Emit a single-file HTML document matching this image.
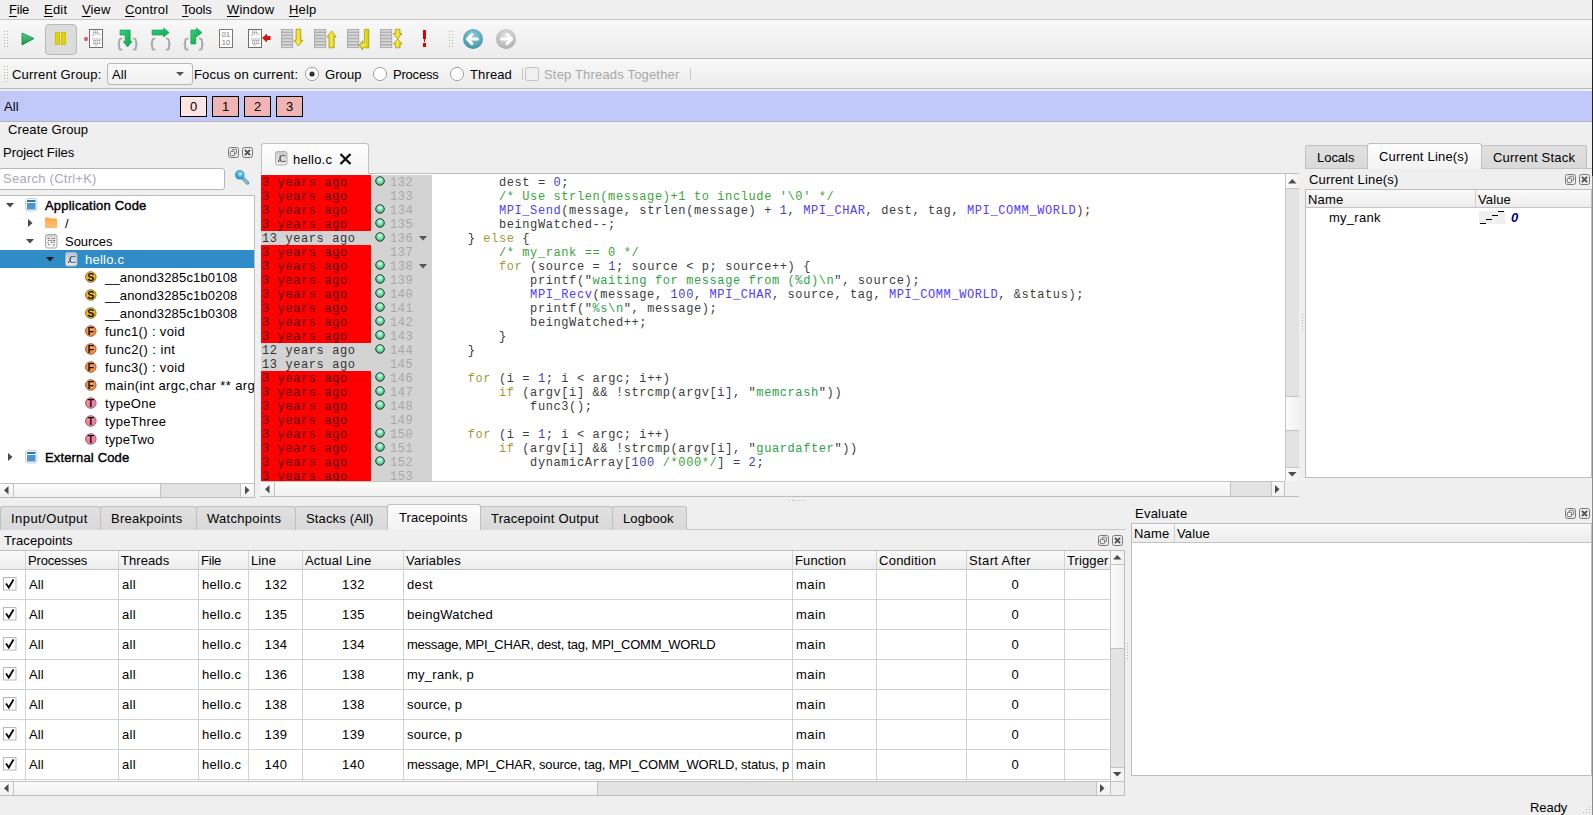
<!DOCTYPE html><html><head><meta charset="utf-8"><style>
*{box-sizing:border-box;margin:0;padding:0}
html,body{width:1593px;height:815px;overflow:hidden;background:#efefef;font-family:"Liberation Sans",sans-serif;font-size:13px;color:#000}
body{position:relative}
.a{position:absolute}
.t{position:absolute;white-space:nowrap;line-height:16px}
.mono{font-family:"Liberation Mono",monospace}
u{text-decoration:underline;text-underline-offset:2px;text-decoration-thickness:1px}
.grip{position:absolute;width:5px;background-image:radial-gradient(circle,#b4b4b4 0.9px,transparent 1.1px);background-size:3px 3px}
.hl{position:absolute;height:1px}
.vl{position:absolute;width:1px}
.tab{position:absolute;border:1px solid #bdbdbd;border-bottom:none;border-radius:3px 3px 0 0;background:linear-gradient(#e4e4e4,#d8d8d8)}
.tab.sel{background:linear-gradient(#fdfdfd,#f0f0f0)}
.tab .t{top:5px}
.db{position:absolute;width:11px;height:11px}
svg{position:absolute;overflow:visible}
</style></head><body>
<div class="t" style="left:9px;top:2px;;letter-spacing:-0.219px"><u>F</u>ile</div>
<div class="t" style="left:44px;top:2px;;letter-spacing:0.207px"><u>E</u>dit</div>
<div class="t" style="left:82px;top:2px;;letter-spacing:0.129px"><u>V</u>iew</div>
<div class="t" style="left:125px;top:2px;;letter-spacing:0.208px"><u>C</u>ontrol</div>
<div class="t" style="left:182px;top:2px;;letter-spacing:-0.159px"><u>T</u>ools</div>
<div class="t" style="left:227px;top:2px;;letter-spacing:0.177px"><u>W</u>indow</div>
<div class="t" style="left:289px;top:2px;;letter-spacing:0.156px"><u>H</u>elp</div>
<div class="a" style="left:0px;top:19px;width:1593px;height:1px;background:#c6c6c6"></div>
<div class="a" style="left:0px;top:20px;width:1593px;height:38px;background:linear-gradient(#f8f8f8,#ececec)"></div>
<div class="a" style="left:0px;top:58px;width:1593px;height:1px;background:#b9b9b9"></div>
<div class="a" style="left:0px;top:59px;width:1593px;height:29px;background:linear-gradient(#f8f8f8,#ececec)"></div>
<div class="a" style="left:0px;top:88px;width:1593px;height:1px;background:#b9b9b9"></div>
<svg style="left:4px;top:31px" width="6" height="18"><rect x="0" y="0" width="1" height="1" fill="#b2b2b2"/><rect x="0" y="3" width="1" height="1" fill="#b2b2b2"/><rect x="0" y="6" width="1" height="1" fill="#b2b2b2"/><rect x="0" y="9" width="1" height="1" fill="#b2b2b2"/><rect x="0" y="12" width="1" height="1" fill="#b2b2b2"/><rect x="0" y="15" width="1" height="1" fill="#b2b2b2"/><rect x="3" y="0" width="1" height="1" fill="#b2b2b2"/><rect x="3" y="3" width="1" height="1" fill="#b2b2b2"/><rect x="3" y="6" width="1" height="1" fill="#b2b2b2"/><rect x="3" y="9" width="1" height="1" fill="#b2b2b2"/><rect x="3" y="12" width="1" height="1" fill="#b2b2b2"/><rect x="3" y="15" width="1" height="1" fill="#b2b2b2"/></svg>
<svg style="left:0;top:0" width="1" height="1"><defs><linearGradient id="gg" x1="0" y1="0" x2="0" y2="1"><stop offset="0" stop-color="#5fd08a"/><stop offset="1" stop-color="#0f8f3f"/></linearGradient><linearGradient id="yg" x1="0" y1="0" x2="1" y2="0"><stop offset="0" stop-color="#f2e64a"/><stop offset="1" stop-color="#cbb800"/></linearGradient><radialGradient id="bg1" cx="0.5" cy="0.35" r="0.7"><stop offset="0" stop-color="#8fd0dc"/><stop offset="1" stop-color="#3a8ea6"/></radialGradient><radialGradient id="bg2" cx="0.5" cy="0.35" r="0.7"><stop offset="0" stop-color="#e6e6e6"/><stop offset="1" stop-color="#a9a9a9"/></radialGradient><radialGradient id="gdot" cx="0.5" cy="0.35" r="0.65"><stop offset="0" stop-color="#e8fff4"/><stop offset="0.55" stop-color="#6fdca4"/><stop offset="1" stop-color="#2fae6a"/></radialGradient></defs></svg>
<svg style="left:21px;top:32px" width="14" height="14"><path d="M1 1 L13 6.5 L1 13 Z" fill="url(#gg)" stroke="#138a43" stroke-width="0.8"/></svg>
<div class="a" style="left:45px;top:24px;width:32px;height:31px;background:#dcdcdc;border:1px solid #b9b9b9;border-radius:4px"></div>
<svg style="left:55px;top:32px" width="12" height="14"><rect x="0.5" y="0.5" width="4" height="12" fill="#e2d400" stroke="#c8b900" stroke-width="0.8"/><rect x="6.5" y="0.5" width="4" height="12" fill="#e2d400" stroke="#c8b900" stroke-width="0.8"/></svg>
<svg style="left:84px;top:37px" width="5" height="5"><circle cx="2" cy="2" r="1.9" fill="#e83a3a"/><rect x="1.6" y="1.6" width="0.8" height="0.8" fill="#fff"/></svg>
<svg style="left:89px;top:29px" width="14" height="19"><rect x="0.5" y="0.5" width="13" height="18" fill="#fff" stroke="#6d6d6d"/><line x1="4" y1="2" x2="9" y2="2" stroke="#9a9a9a" stroke-width="0.9" stroke-dasharray="1.5 0.5"/><line x1="4" y1="3.5" x2="10" y2="3.5" stroke="#9a9a9a" stroke-width="0.9" stroke-dasharray="1.5 0.5"/><line x1="4" y1="5" x2="12" y2="5" stroke="#9a9a9a" stroke-width="0.9" stroke-dasharray="1.5 0.5"/><line x1="3" y1="6.5" x2="5" y2="6.5" stroke="#9a9a9a" stroke-width="0.9" stroke-dasharray="1.5 0.5"/><line x1="3" y1="10" x2="12" y2="10" stroke="#9a9a9a" stroke-width="0.9" stroke-dasharray="1.5 0.5"/><line x1="4" y1="11.5" x2="12" y2="11.5" stroke="#9a9a9a" stroke-width="0.9" stroke-dasharray="1.5 0.5"/><line x1="4" y1="13" x2="11" y2="13" stroke="#9a9a9a" stroke-width="0.9" stroke-dasharray="1.5 0.5"/><line x1="4" y1="14.5" x2="12" y2="14.5" stroke="#9a9a9a" stroke-width="0.9" stroke-dasharray="1.5 0.5"/><line x1="5" y1="16" x2="9" y2="16" stroke="#9a9a9a" stroke-width="0.9" stroke-dasharray="1.5 0.5"/></svg>
<svg style="left:0;top:0" width="1593" height="60"><path d="M121.6 38.6 Q119.2 38.6 119.2 41 V42.6 Q119.2 44.2 117.6 44.2 Q119.2 44.2 119.2 45.8 V47.4 Q119.2 49.6 121.6 49.6" stroke="#a9a9a9" stroke-width="1.9" fill="none" stroke-linecap="round"/><path d="M133.6 38.6 Q136 38.6 136 41 V42.6 Q136 44.2 137.6 44.2 Q136 44.2 136 45.8 V47.4 Q136 49.6 133.6 49.6" stroke="#a9a9a9" stroke-width="1.9" fill="none" stroke-linecap="round"/><path d="M154.6 38.6 Q152.2 38.6 152.2 41 V42.6 Q152.2 44.2 150.6 44.2 Q152.2 44.2 152.2 45.8 V47.4 Q152.2 49.6 154.6 49.6" stroke="#a9a9a9" stroke-width="1.9" fill="none" stroke-linecap="round"/><path d="M166.6 38.6 Q169 38.6 169 41 V42.6 Q169 44.2 170.6 44.2 Q169 44.2 169 45.8 V47.4 Q169 49.6 166.6 49.6" stroke="#a9a9a9" stroke-width="1.9" fill="none" stroke-linecap="round"/><path d="M187.6 38.6 Q185.2 38.6 185.2 41 V42.6 Q185.2 44.2 183.6 44.2 Q185.2 44.2 185.2 45.8 V47.4 Q185.2 49.6 187.6 49.6" stroke="#a9a9a9" stroke-width="1.9" fill="none" stroke-linecap="round"/><path d="M199.6 38.6 Q202 38.6 202 41 V42.6 Q202 44.2 203.6 44.2 Q202 44.2 202 45.8 V47.4 Q202 49.6 199.6 49.6" stroke="#a9a9a9" stroke-width="1.9" fill="none" stroke-linecap="round"/><path d="M120 30 H130.2 V41.3 H132.2 L127.6 47 L123 41.3 H125.2 V35 H120 Z" fill="url(#gg2)" stroke="#0f9a48" stroke-width="0.6"/><path d="M152 30 H163.5 V28 L169.2 32.5 L163.5 37 V35 H152 Z" fill="url(#gg2)" stroke="#0f9a48" stroke-width="0.6"/><path d="M190.8 44 V30 H196.4 V28 L202 32.5 L196.4 37 V35 H195.8 V44 Z" fill="url(#gg2)" stroke="#0f9a48" stroke-width="0.6"/><defs><linearGradient id="gg2" x1="0" y1="0" x2="1" y2="1"><stop offset="0" stop-color="#38d27a"/><stop offset="1" stop-color="#0aa04a"/></linearGradient></defs></svg>
<svg style="left:219px;top:29px" width="15" height="19"><rect x="0.5" y="0.5" width="13" height="18" fill="#fff" stroke="#7a7a7a"/><text x="7" y="8" text-anchor="middle" font-family="Liberation Sans" font-size="7.5" fill="#7a7a7a">01</text><text x="7" y="16" text-anchor="middle" font-family="Liberation Sans" font-size="7.5" fill="#7a7a7a">10</text></svg>
<svg style="left:248px;top:29px" width="14" height="19"><rect x="0.5" y="0.5" width="13" height="18" fill="#fff" stroke="#6d6d6d"/><line x1="4" y1="2" x2="9" y2="2" stroke="#9a9a9a" stroke-width="0.9" stroke-dasharray="1.5 0.5"/><line x1="4" y1="3.5" x2="10" y2="3.5" stroke="#9a9a9a" stroke-width="0.9" stroke-dasharray="1.5 0.5"/><line x1="4" y1="5" x2="12" y2="5" stroke="#9a9a9a" stroke-width="0.9" stroke-dasharray="1.5 0.5"/><line x1="3" y1="6.5" x2="5" y2="6.5" stroke="#9a9a9a" stroke-width="0.9" stroke-dasharray="1.5 0.5"/><line x1="3" y1="10" x2="12" y2="10" stroke="#9a9a9a" stroke-width="0.9" stroke-dasharray="1.5 0.5"/><line x1="4" y1="11.5" x2="12" y2="11.5" stroke="#9a9a9a" stroke-width="0.9" stroke-dasharray="1.5 0.5"/><line x1="4" y1="13" x2="11" y2="13" stroke="#9a9a9a" stroke-width="0.9" stroke-dasharray="1.5 0.5"/><line x1="4" y1="14.5" x2="12" y2="14.5" stroke="#9a9a9a" stroke-width="0.9" stroke-dasharray="1.5 0.5"/><line x1="5" y1="16" x2="9" y2="16" stroke="#9a9a9a" stroke-width="0.9" stroke-dasharray="1.5 0.5"/></svg>
<svg style="left:262px;top:33px" width="9" height="10"><path d="M0 5 L5 0.5 V3 H8.5 V7 H5 V9.5 Z" fill="#d81010"/></svg>
<svg style="left:0;top:0" width="1593" height="60"><defs><linearGradient id="yg2" x1="0" y1="0" x2="1" y2="0"><stop offset="0" stop-color="#d8c800"/><stop offset="0.45" stop-color="#f4ea50"/><stop offset="1" stop-color="#d2c200"/></linearGradient></defs><rect x="281.5" y="29.5" width="11.2" height="2.6" fill="#d9d9d9" stroke="#a9a9a9" stroke-width="0.9"/><rect x="281.5" y="32.6" width="11.2" height="2.6" fill="#d9d9d9" stroke="#a9a9a9" stroke-width="0.9"/><rect x="281.5" y="35.7" width="11.2" height="2.6" fill="#d9d9d9" stroke="#a9a9a9" stroke-width="0.9"/><rect x="281.5" y="38.8" width="11.2" height="2.6" fill="#d9d9d9" stroke="#a9a9a9" stroke-width="0.9"/><rect x="281.5" y="41.9" width="11.2" height="2.6" fill="#d9d9d9" stroke="#a9a9a9" stroke-width="0.9"/><rect x="281.5" y="45.0" width="11.2" height="2.6" fill="#d9d9d9" stroke="#a9a9a9" stroke-width="0.9"/><rect x="314.5" y="29.5" width="11.2" height="2.6" fill="#d9d9d9" stroke="#a9a9a9" stroke-width="0.9"/><rect x="314.5" y="32.6" width="11.2" height="2.6" fill="#d9d9d9" stroke="#a9a9a9" stroke-width="0.9"/><rect x="314.5" y="35.7" width="11.2" height="2.6" fill="#d9d9d9" stroke="#a9a9a9" stroke-width="0.9"/><rect x="314.5" y="38.8" width="11.2" height="2.6" fill="#d9d9d9" stroke="#a9a9a9" stroke-width="0.9"/><rect x="314.5" y="41.9" width="11.2" height="2.6" fill="#d9d9d9" stroke="#a9a9a9" stroke-width="0.9"/><rect x="314.5" y="45.0" width="11.2" height="2.6" fill="#d9d9d9" stroke="#a9a9a9" stroke-width="0.9"/><rect x="347.5" y="29.5" width="11.2" height="2.6" fill="#d9d9d9" stroke="#a9a9a9" stroke-width="0.9"/><rect x="347.5" y="32.6" width="11.2" height="2.6" fill="#d9d9d9" stroke="#a9a9a9" stroke-width="0.9"/><rect x="347.5" y="35.7" width="11.2" height="2.6" fill="#d9d9d9" stroke="#a9a9a9" stroke-width="0.9"/><rect x="347.5" y="38.8" width="11.2" height="2.6" fill="#d9d9d9" stroke="#a9a9a9" stroke-width="0.9"/><rect x="347.5" y="41.9" width="11.2" height="2.6" fill="#d9d9d9" stroke="#a9a9a9" stroke-width="0.9"/><rect x="347.5" y="45.0" width="11.2" height="2.6" fill="#d9d9d9" stroke="#a9a9a9" stroke-width="0.9"/><rect x="380.5" y="29.5" width="11.2" height="2.6" fill="#d9d9d9" stroke="#a9a9a9" stroke-width="0.9"/><rect x="380.5" y="32.6" width="11.2" height="2.6" fill="#d9d9d9" stroke="#a9a9a9" stroke-width="0.9"/><rect x="380.5" y="35.7" width="11.2" height="2.6" fill="#d9d9d9" stroke="#a9a9a9" stroke-width="0.9"/><rect x="380.5" y="38.8" width="11.2" height="2.6" fill="#d9d9d9" stroke="#a9a9a9" stroke-width="0.9"/><rect x="380.5" y="41.9" width="11.2" height="2.6" fill="#d9d9d9" stroke="#a9a9a9" stroke-width="0.9"/><rect x="380.5" y="45.0" width="11.2" height="2.6" fill="#d9d9d9" stroke="#a9a9a9" stroke-width="0.9"/><path d="M296 29.3 H300.8 V40.3 H303 L298.4 46 L293.8 40.3 H296 Z" fill="url(#yg2)" stroke="#a89a00" stroke-width="0.8" stroke-linejoin="miter"/><path d="M329 47.8 H334.2 V37 H336.2 L331.6 30.9 L327 37 H329 Z" fill="url(#yg2)" stroke="#a89a00" stroke-width="0.8" stroke-linejoin="miter"/><path d="M364.4 29.3 H368.8 V47.8 H362.5 V50 L359.2 45.2 L362.5 40.7 V43.2 H364.4 Z" fill="url(#yg2)" stroke="#a89a00" stroke-width="0.8" stroke-linejoin="miter"/><path d="M395.4 29.3 H400 V33.5 H402 L397.7 39 L393.4 33.5 H395.4 Z M395.4 47.8 H400 V44 H402 L397.7 39 L393.4 44 H395.4 Z" fill="url(#yg2)" stroke="#a89a00" stroke-width="0.8" stroke-linejoin="miter"/></svg>
<div class="a" style="left:423px;top:30px;width:3px;height:9px;background:#e00000"></div>
<div class="a" style="left:424px;top:39px;width:1px;height:3px;background:#e00000"></div>
<div class="a" style="left:423px;top:43px;width:3px;height:4px;background:#e00000"></div>
<svg style="left:449px;top:31px" width="6" height="18"><rect x="0" y="0" width="1" height="1" fill="#b2b2b2"/><rect x="0" y="3" width="1" height="1" fill="#b2b2b2"/><rect x="0" y="6" width="1" height="1" fill="#b2b2b2"/><rect x="0" y="9" width="1" height="1" fill="#b2b2b2"/><rect x="0" y="12" width="1" height="1" fill="#b2b2b2"/><rect x="0" y="15" width="1" height="1" fill="#b2b2b2"/><rect x="3" y="0" width="1" height="1" fill="#b2b2b2"/><rect x="3" y="3" width="1" height="1" fill="#b2b2b2"/><rect x="3" y="6" width="1" height="1" fill="#b2b2b2"/><rect x="3" y="9" width="1" height="1" fill="#b2b2b2"/><rect x="3" y="12" width="1" height="1" fill="#b2b2b2"/><rect x="3" y="15" width="1" height="1" fill="#b2b2b2"/></svg>
<svg style="left:462px;top:28px" width="22" height="22"><circle cx="11" cy="11" r="10" fill="url(#bg1)"/><path d="M5.5 11 L10 6.3 M5.5 11 L10 15.7 M5.5 11 H15.5" stroke="#fff" stroke-width="3" fill="none" stroke-linecap="round"/></svg>
<svg style="left:495px;top:28px" width="22" height="22"><circle cx="11" cy="11" r="10" fill="url(#bg2)"/><path d="M16.5 11 L12 6.3 M16.5 11 L12 15.7 M16.5 11 H6.5" stroke="#fff" stroke-width="3" fill="none" stroke-linecap="round"/></svg>
<svg style="left:4px;top:66px" width="6" height="18"><rect x="0" y="0" width="1" height="1" fill="#b2b2b2"/><rect x="0" y="3" width="1" height="1" fill="#b2b2b2"/><rect x="0" y="6" width="1" height="1" fill="#b2b2b2"/><rect x="0" y="9" width="1" height="1" fill="#b2b2b2"/><rect x="0" y="12" width="1" height="1" fill="#b2b2b2"/><rect x="0" y="15" width="1" height="1" fill="#b2b2b2"/><rect x="3" y="0" width="1" height="1" fill="#b2b2b2"/><rect x="3" y="3" width="1" height="1" fill="#b2b2b2"/><rect x="3" y="6" width="1" height="1" fill="#b2b2b2"/><rect x="3" y="9" width="1" height="1" fill="#b2b2b2"/><rect x="3" y="12" width="1" height="1" fill="#b2b2b2"/><rect x="3" y="15" width="1" height="1" fill="#b2b2b2"/></svg>
<div class="t" style="left:12px;top:67px;;letter-spacing:0.199px">Current Group:</div>
<div class="a" style="left:107px;top:63px;width:86px;height:22px;background:linear-gradient(#fbfbfb,#f0f0f0);border:1px solid #b6b6b6;border-radius:3px"></div>
<div class="t" style="left:112px;top:67px;;letter-spacing:0.135px">All</div>
<svg style="left:176px;top:72px" width="9" height="5"><path d="M0 0 H8 L4 4 Z" fill="#555"/></svg>
<div class="t" style="left:194px;top:67px;;letter-spacing:0.179px">Focus on current:</div>
<svg style="left:305px;top:67px" width="15" height="15"><circle cx="7" cy="7" r="6.6" fill="#fff" stroke="#a0a0a0"/><circle cx="7" cy="7" r="2.6" fill="#333"/></svg>
<div class="t" style="left:325px;top:67px;;letter-spacing:0.081px">Group</div>
<svg style="left:373px;top:67px" width="15" height="15"><circle cx="7" cy="7" r="6.6" fill="#fff" stroke="#a0a0a0"/></svg>
<div class="t" style="left:393px;top:67px;;letter-spacing:-0.205px">Process</div>
<svg style="left:450px;top:67px" width="15" height="15"><circle cx="7" cy="7" r="6.6" fill="#fff" stroke="#a0a0a0"/></svg>
<div class="t" style="left:470px;top:67px;;letter-spacing:0.130px">Thread</div>
<div class="a" style="left:522px;top:68px;width:1px;height:12px;background:#c8c8c8"></div>
<div class="a" style="left:525px;top:67px;width:14px;height:14px;background:#f0f0f0;border:1px solid #c4c4c4;border-radius:2px"></div>
<div class="t" style="left:544px;top:67px;color:#a8a8a8;letter-spacing:0.176px">Step Threads Together</div>
<div class="a" style="left:690px;top:68px;width:1px;height:12px;background:#c8c8c8"></div>
<div class="a" style="left:0px;top:89px;width:1593px;height:2px;background:#f0f0f0"></div>
<div class="a" style="left:0px;top:91px;width:1593px;height:30px;background:#c1c9fb"></div>
<div class="a" style="left:0px;top:121px;width:1593px;height:1px;background:#b5b5b5"></div>
<div class="t" style="left:4px;top:99px;;letter-spacing:0.135px">All</div>
<div class="a" style="left:180px;top:96px;width:27px;height:21px;background:#ffe4e4;border:1px solid #000"></div>
<div class="t" style="left:180px;top:99px;width:27px;text-align:center">0</div>
<div class="a" style="left:212px;top:96px;width:27px;height:21px;background:#f0b4b4;border:1px solid #000"></div>
<div class="t" style="left:212px;top:99px;width:27px;text-align:center">1</div>
<div class="a" style="left:244px;top:96px;width:27px;height:21px;background:#f0b4b4;border:1px solid #000"></div>
<div class="t" style="left:244px;top:99px;width:27px;text-align:center">2</div>
<div class="a" style="left:276px;top:96px;width:27px;height:21px;background:#f0b4b4;border:1px solid #000"></div>
<div class="t" style="left:276px;top:99px;width:27px;text-align:center">3</div>
<div class="t" style="left:8px;top:122px;;letter-spacing:0.122px">Create Group</div>
<div class="t" style="left:3px;top:145px;;letter-spacing:-0.025px">Project Files</div>
<svg style="left:228px;top:147px" width="26" height="12"><rect x="0.5" y="0.5" width="10" height="10" rx="2" fill="none" stroke="#6a6a6a" stroke-width="0.9"/><rect x="4.2" y="2.3" width="4.3" height="4.3" rx="0.8" fill="none" stroke="#6a6a6a" stroke-width="0.9"/><rect x="2.3" y="4.3" width="4.3" height="4.3" rx="0.8" fill="#efefef" stroke="#6a6a6a" stroke-width="0.9"/><rect x="14.5" y="0.5" width="10" height="10" rx="2" fill="none" stroke="#6a6a6a" stroke-width="0.9"/><path d="M16.9 2.9 L22.1 8.1 M22.1 2.9 L16.9 8.1" stroke="#505050" stroke-width="1.9"/></svg>
<div class="a" style="left:-2px;top:168px;width:227px;height:22px;background:#fff;border:1px solid #b6b6b6;border-radius:3px"></div>
<div class="t" style="left:3px;top:171px;color:#a9a9b6;letter-spacing:0.251px">Search (Ctrl+K)</div>
<svg style="left:233px;top:169px" width="18" height="18"><defs><radialGradient id="mg" cx="0.55" cy="0.4" r="0.6"><stop offset="0" stop-color="#d8f2fb"/><stop offset="0.45" stop-color="#53b5dc"/><stop offset="1" stop-color="#2a8cbf"/></radialGradient></defs><path d="M9.6 9 L14.6 14" stroke="#4a9fbf" stroke-width="3.4" stroke-linecap="round"/><path d="M9.8 9.2 L14.4 13.8" stroke="#bdbdbd" stroke-width="1.6" stroke-linecap="round"/><circle cx="6.8" cy="5.8" r="4.8" fill="url(#mg)"/></svg>
<div class="a" style="left:0px;top:195px;width:255px;height:303px;background:#fff;border:1px solid #bdbdbd;border-left:none"></div>
<div class="a" style="left:0px;top:195px;width:255px;height:1px;background:#bdbdbd"></div>
<div class="a" style="left:0px;top:250px;width:254px;height:18px;background:#308cc6"></div>
<svg style="left:6px;top:203px" width="9" height="5"><path d="M0 0 H8 L4 4.5 Z" fill="#4a4a4a"/></svg>
<svg style="left:25px;top:198px" width="13" height="14"><rect x="0.5" y="0.5" width="11.5" height="12.5" rx="2" fill="#f4f8fb" stroke="#c9d3da"/><rect x="2" y="2" width="8.5" height="2" fill="#2f76b7"/><rect x="2" y="5" width="8.5" height="6.5" fill="#4f94cf"/></svg>
<div class="t" style="left:45px;top:198px;-webkit-text-stroke:0.4px #000;letter-spacing:0.204px">Application Code</div>
<svg style="left:28px;top:219px" width="5" height="9"><path d="M0 0 V8 L4.5 4 Z" fill="#4a4a4a"/></svg>
<svg style="left:44px;top:217px" width="14" height="12"><defs><linearGradient id="fg" x1="0" y1="0" x2="0" y2="1"><stop offset="0" stop-color="#ffa43c"/><stop offset="1" stop-color="#ffc27a"/></linearGradient></defs><path d="M1 1.5 Q1 0.5 2 0.5 H5 L6 1.5 H12 Q13 1.5 13 2.5 V10 Q13 11 12 11 H2 Q1 11 1 10 Z" fill="url(#fg)"/><path d="M1 4 H13 V10 Q13 11 12 11 H2 Q1 11 1 10 Z" fill="#ffb560" opacity="0.7"/><path d="M1 7 L13 9" stroke="#ffd9a8" stroke-width="0.8" opacity="0.6"/></svg>
<div class="t" style="left:65px;top:216px;">/</div>
<svg style="left:26px;top:239px" width="9" height="5"><path d="M0 0 H8 L4 4.5 Z" fill="#4a4a4a"/></svg>
<svg style="left:45px;top:234px" width="13" height="15"><defs><linearGradient id="sg" x1="0" y1="0" x2="0" y2="1"><stop offset="0" stop-color="#c4c4c4"/><stop offset="0.3" stop-color="#ececec"/><stop offset="1" stop-color="#f6f6f6"/></linearGradient></defs><rect x="0.5" y="0.5" width="11.5" height="13.5" rx="2" fill="url(#sg)" stroke="#a8a8a8"/><path d="M2.5 4.5 h2 M6.5 4.5 h1 M8.5 4.5 h1.5 M3 6.5 h1 M5 7 l2 -1 M8 6.5 h2 M2.5 8.5 h1 M6 9 l1.5 -1 M8.5 8.5 h1 M3 10.5 h1.5 M8 11 h1.5" stroke="#444" stroke-width="0.8"/></svg>
<div class="t" style="left:65px;top:234px;;letter-spacing:-0.031px">Sources</div>
<svg style="left:46px;top:257px" width="9" height="5"><path d="M0 0 H8 L4 4.5 Z" fill="#1a1a1a"/></svg>
<svg style="left:65px;top:252px" width="13" height="15"><defs><linearGradient id="cg1" x1="0" y1="0" x2="0" y2="1"><stop offset="0" stop-color="#b8c8d6"/><stop offset="1" stop-color="#e4edf4"/></linearGradient></defs><rect x="0.5" y="0.5" width="11.5" height="13.5" rx="2" fill="url(#cg1)" stroke="#9fb2c2"/><rect x="3" y="9.5" width="1.3" height="1.3" fill="#111"/><text x="7.3" y="10.8" text-anchor="middle" font-family="Liberation Serif" font-size="10" fill="#111">C</text></svg>
<div class="t" style="left:85px;top:252px;color:#fff;letter-spacing:0.230px">hello.c</div>
<svg style="left:85px;top:271px" width="13" height="13"><defs><radialGradient id="lgS" cx="0.45" cy="0.3" r="0.75"><stop offset="0" stop-color="#fff" stop-opacity="0.55"/><stop offset="0.5" stop-color="#f4b90a" stop-opacity="0"/></radialGradient></defs><circle cx="5.8" cy="6" r="5.3" fill="#f4b90a" stroke="#7f6a3a" stroke-width="0.9"/><circle cx="5.8" cy="6" r="5" fill="url(#lgS)"/><text x="5.8" y="9.9" text-anchor="middle" font-family="Liberation Sans" font-weight="bold" font-size="10.5" fill="#111">S</text></svg>
<div class="t" style="left:105px;top:270px;;letter-spacing:0.169px">__anond3285c1b0108</div>
<svg style="left:85px;top:289px" width="13" height="13"><defs><radialGradient id="lgS" cx="0.45" cy="0.3" r="0.75"><stop offset="0" stop-color="#fff" stop-opacity="0.55"/><stop offset="0.5" stop-color="#f4b90a" stop-opacity="0"/></radialGradient></defs><circle cx="5.8" cy="6" r="5.3" fill="#f4b90a" stroke="#7f6a3a" stroke-width="0.9"/><circle cx="5.8" cy="6" r="5" fill="url(#lgS)"/><text x="5.8" y="9.9" text-anchor="middle" font-family="Liberation Sans" font-weight="bold" font-size="10.5" fill="#111">S</text></svg>
<div class="t" style="left:105px;top:288px;;letter-spacing:0.169px">__anond3285c1b0208</div>
<svg style="left:85px;top:307px" width="13" height="13"><defs><radialGradient id="lgS" cx="0.45" cy="0.3" r="0.75"><stop offset="0" stop-color="#fff" stop-opacity="0.55"/><stop offset="0.5" stop-color="#f4b90a" stop-opacity="0"/></radialGradient></defs><circle cx="5.8" cy="6" r="5.3" fill="#f4b90a" stroke="#7f6a3a" stroke-width="0.9"/><circle cx="5.8" cy="6" r="5" fill="url(#lgS)"/><text x="5.8" y="9.9" text-anchor="middle" font-family="Liberation Sans" font-weight="bold" font-size="10.5" fill="#111">S</text></svg>
<div class="t" style="left:105px;top:306px;;letter-spacing:0.169px">__anond3285c1b0308</div>
<svg style="left:85px;top:325px" width="13" height="13"><defs><radialGradient id="lgF" cx="0.45" cy="0.3" r="0.75"><stop offset="0" stop-color="#fff" stop-opacity="0.55"/><stop offset="0.5" stop-color="#f8913f" stop-opacity="0"/></radialGradient></defs><circle cx="5.8" cy="6" r="5.3" fill="#f8913f" stroke="#8a5a3a" stroke-width="0.9"/><circle cx="5.8" cy="6" r="5" fill="url(#lgF)"/><text x="5.8" y="9.9" text-anchor="middle" font-family="Liberation Sans" font-weight="bold" font-size="10.5" fill="#111">F</text></svg>
<div class="t" style="left:105px;top:324px;;letter-spacing:0.355px">func1() : void</div>
<svg style="left:85px;top:343px" width="13" height="13"><defs><radialGradient id="lgF" cx="0.45" cy="0.3" r="0.75"><stop offset="0" stop-color="#fff" stop-opacity="0.55"/><stop offset="0.5" stop-color="#f8913f" stop-opacity="0"/></radialGradient></defs><circle cx="5.8" cy="6" r="5.3" fill="#f8913f" stroke="#8a5a3a" stroke-width="0.9"/><circle cx="5.8" cy="6" r="5" fill="url(#lgF)"/><text x="5.8" y="9.9" text-anchor="middle" font-family="Liberation Sans" font-weight="bold" font-size="10.5" fill="#111">F</text></svg>
<div class="t" style="left:105px;top:342px;;letter-spacing:0.410px">func2() : int</div>
<svg style="left:85px;top:361px" width="13" height="13"><defs><radialGradient id="lgF" cx="0.45" cy="0.3" r="0.75"><stop offset="0" stop-color="#fff" stop-opacity="0.55"/><stop offset="0.5" stop-color="#f8913f" stop-opacity="0"/></radialGradient></defs><circle cx="5.8" cy="6" r="5.3" fill="#f8913f" stroke="#8a5a3a" stroke-width="0.9"/><circle cx="5.8" cy="6" r="5" fill="url(#lgF)"/><text x="5.8" y="9.9" text-anchor="middle" font-family="Liberation Sans" font-weight="bold" font-size="10.5" fill="#111">F</text></svg>
<div class="t" style="left:105px;top:360px;;letter-spacing:0.355px">func3() : void</div>
<svg style="left:85px;top:379px" width="13" height="13"><defs><radialGradient id="lgF" cx="0.45" cy="0.3" r="0.75"><stop offset="0" stop-color="#fff" stop-opacity="0.55"/><stop offset="0.5" stop-color="#f8913f" stop-opacity="0"/></radialGradient></defs><circle cx="5.8" cy="6" r="5.3" fill="#f8913f" stroke="#8a5a3a" stroke-width="0.9"/><circle cx="5.8" cy="6" r="5" fill="url(#lgF)"/><text x="5.8" y="9.9" text-anchor="middle" font-family="Liberation Sans" font-weight="bold" font-size="10.5" fill="#111">F</text></svg>
<div class="t" style="left:105px;top:378px;;letter-spacing:0.402px">main(int argc,char ** argv)</div>
<svg style="left:85px;top:397px" width="13" height="13"><defs><radialGradient id="lgT" cx="0.45" cy="0.3" r="0.75"><stop offset="0" stop-color="#fff" stop-opacity="0.55"/><stop offset="0.5" stop-color="#f5809c" stop-opacity="0"/></radialGradient></defs><circle cx="5.8" cy="6" r="5.3" fill="#f5809c" stroke="#8a5a64" stroke-width="0.9"/><circle cx="5.8" cy="6" r="5" fill="url(#lgT)"/><text x="5.8" y="9.9" text-anchor="middle" font-family="Liberation Sans" font-weight="bold" font-size="10.5" fill="#111">T</text></svg>
<div class="t" style="left:105px;top:396px;;letter-spacing:0.304px">typeOne</div>
<svg style="left:85px;top:415px" width="13" height="13"><defs><radialGradient id="lgT" cx="0.45" cy="0.3" r="0.75"><stop offset="0" stop-color="#fff" stop-opacity="0.55"/><stop offset="0.5" stop-color="#f5809c" stop-opacity="0"/></radialGradient></defs><circle cx="5.8" cy="6" r="5.3" fill="#f5809c" stroke="#8a5a64" stroke-width="0.9"/><circle cx="5.8" cy="6" r="5" fill="url(#lgT)"/><text x="5.8" y="9.9" text-anchor="middle" font-family="Liberation Sans" font-weight="bold" font-size="10.5" fill="#111">T</text></svg>
<div class="t" style="left:105px;top:414px;;letter-spacing:0.297px">typeThree</div>
<svg style="left:85px;top:433px" width="13" height="13"><defs><radialGradient id="lgT" cx="0.45" cy="0.3" r="0.75"><stop offset="0" stop-color="#fff" stop-opacity="0.55"/><stop offset="0.5" stop-color="#f5809c" stop-opacity="0"/></radialGradient></defs><circle cx="5.8" cy="6" r="5.3" fill="#f5809c" stroke="#8a5a64" stroke-width="0.9"/><circle cx="5.8" cy="6" r="5" fill="url(#lgT)"/><text x="5.8" y="9.9" text-anchor="middle" font-family="Liberation Sans" font-weight="bold" font-size="10.5" fill="#111">T</text></svg>
<div class="t" style="left:105px;top:432px;;letter-spacing:0.129px">typeTwo</div>
<svg style="left:8px;top:453px" width="5" height="9"><path d="M0 0 V8 L4.5 4 Z" fill="#4a4a4a"/></svg>
<svg style="left:25px;top:450px" width="13" height="14"><rect x="0.5" y="0.5" width="11.5" height="12.5" rx="2" fill="#f4f8fb" stroke="#c9d3da"/><rect x="2" y="2" width="8.5" height="2" fill="#2f76b7"/><rect x="2" y="5" width="8.5" height="6.5" fill="#4f94cf"/></svg>
<div class="t" style="left:45px;top:450px;-webkit-text-stroke:0.4px #000;letter-spacing:0.150px">External Code</div>
<div class="a" style="left:254px;top:196px;width:1px;height:287px;background:#bdbdbd"></div>
<div class="a" style="left:255px;top:140px;width:5px;height:360px;background:#efefef"></div>
<div class="a" style="left:0px;top:483px;width:254px;height:14px;background:#e3e3e3"></div>
<div class="a" style="left:0px;top:483px;width:254px;height:1px;background:#c3c3c3"></div>
<div class="a" style="left:0px;top:484px;width:13px;height:13px;background:linear-gradient(#fbfbfb,#f1f1f1)"></div>
<div class="a" style="left:13px;top:484px;width:1px;height:13px;background:#c3c3c3"></div>
<div class="a" style="left:14px;top:484px;width:146px;height:13px;background:linear-gradient(#fbfbfb,#f1f1f1)"></div>
<div class="a" style="left:160px;top:484px;width:1px;height:13px;background:#c3c3c3"></div>
<div class="a" style="left:240px;top:484px;width:1px;height:13px;background:#c3c3c3"></div>
<div class="a" style="left:241px;top:484px;width:13px;height:13px;background:linear-gradient(#fbfbfb,#f1f1f1)"></div>
<svg style="left:4px;top:486px" width="5" height="9"><path d="M4.5 0 V8.5 L0 4.25 Z" fill="#4d4d4d"/></svg>
<svg style="left:245px;top:486px" width="5" height="9"><path d="M0 0 V8.5 L4.5 4.25 Z" fill="#4d4d4d"/></svg>
<div class="a" style="left:0px;top:497px;width:254px;height:1px;background:#bdbdbd"></div>
<div class="a" style="left:260px;top:173px;width:1039px;height:1px;background:#bdbdbd"></div>
<div class="a" style="left:261px;top:143px;width:108px;height:31px;background:linear-gradient(#fdfdfd,#f4f4f4);border:1px solid #c3c3c3;border-bottom:none;border-radius:3px 3px 0 0"></div>
<svg style="left:275px;top:151px" width="13" height="15"><defs><linearGradient id="cg2" x1="0" y1="0" x2="0" y2="1"><stop offset="0" stop-color="#c8c8c8"/><stop offset="1" stop-color="#f0f0f0"/></linearGradient></defs><rect x="0.5" y="0.5" width="11.5" height="13.5" rx="2" fill="url(#cg2)" stroke="#b0b0b0"/><rect x="3" y="9.5" width="1.3" height="1.3" fill="#111"/><text x="7.3" y="10.8" text-anchor="middle" font-family="Liberation Serif" font-size="10" fill="#111">C</text></svg>
<div class="t" style="left:293px;top:152px;;letter-spacing:0.230px">hello.c</div>
<svg style="left:339px;top:153px" width="13" height="12"><path d="M1.5 1 L11.5 11 M11.5 1 L1.5 11" stroke="#111" stroke-width="2.3"/></svg>
<div class="a" style="left:260px;top:174px;width:1px;height:323px;background:#f2f6f6"></div>
<div class="a" style="left:261px;top:174px;width:1024px;height:307px;background:#fff"></div>
<div class="a" style="left:261px;top:174px;width:1024px;height:307px;overflow:hidden">
<div class="a" style="left:0px;top:1px;width:110px;height:14px;background:#ff0000"></div>
<div class="t" style="left:1px;top:0px;font-family:'Liberation Mono',monospace;font-size:12px;letter-spacing:0.6px;color:#5a0000;line-height:14px;top:2px">3 years ago</div>
<div class="a" style="left:110px;top:1px;width:61px;height:14px;background:#d3d3d3"></div>
<svg style="left:114px;top:2px" width="10" height="10"><circle cx="5" cy="5" r="4.3" fill="url(#gdot)" stroke="#1e2e26" stroke-width="0.9"/></svg>
<div class="t" style="left:129px;top:2px;font-family:'Liberation Mono',monospace;font-size:12px;letter-spacing:0.6px;color:#a8a8a8;line-height:14px">132</div>
<div class="t" style="left:237.9px;top:2px;font-family:'Liberation Mono',monospace;font-size:12px;letter-spacing:0.6px;line-height:14px;white-space:pre"><span style="color:#3c3c3c">dest = </span><span style="color:#4444b8">0</span><span style="color:#3c3c3c">;</span></div>
<div class="a" style="left:0px;top:15px;width:110px;height:14px;background:#ff0000"></div>
<div class="t" style="left:1px;top:14px;font-family:'Liberation Mono',monospace;font-size:12px;letter-spacing:0.6px;color:#5a0000;line-height:14px;top:16px">3 years ago</div>
<div class="a" style="left:110px;top:15px;width:61px;height:14px;background:#d3d3d3"></div>
<div class="t" style="left:129px;top:16px;font-family:'Liberation Mono',monospace;font-size:12px;letter-spacing:0.6px;color:#a8a8a8;line-height:14px">133</div>
<div class="t" style="left:237.9px;top:16px;font-family:'Liberation Mono',monospace;font-size:12px;letter-spacing:0.6px;line-height:14px;white-space:pre"><span style="color:#3aa33a">/* Use strlen(message)+1 to include '\0' */</span></div>
<div class="a" style="left:0px;top:29px;width:110px;height:14px;background:#ff0000"></div>
<div class="t" style="left:1px;top:28px;font-family:'Liberation Mono',monospace;font-size:12px;letter-spacing:0.6px;color:#5a0000;line-height:14px;top:30px">3 years ago</div>
<div class="a" style="left:110px;top:29px;width:61px;height:14px;background:#d3d3d3"></div>
<svg style="left:114px;top:30px" width="10" height="10"><circle cx="5" cy="5" r="4.3" fill="url(#gdot)" stroke="#1e2e26" stroke-width="0.9"/></svg>
<div class="t" style="left:129px;top:30px;font-family:'Liberation Mono',monospace;font-size:12px;letter-spacing:0.6px;color:#a8a8a8;line-height:14px">134</div>
<div class="t" style="left:237.9px;top:30px;font-family:'Liberation Mono',monospace;font-size:12px;letter-spacing:0.6px;line-height:14px;white-space:pre"><span style="color:#5040f8">MPI_Send</span><span style="color:#3c3c3c">(message, strlen(message) + </span><span style="color:#4444b8">1</span><span style="color:#3c3c3c">, </span><span style="color:#5040f8">MPI_CHAR</span><span style="color:#3c3c3c">, dest, tag, </span><span style="color:#5040f8">MPI_COMM_WORLD</span><span style="color:#3c3c3c">);</span></div>
<div class="a" style="left:0px;top:43px;width:110px;height:14px;background:#ff0000"></div>
<div class="t" style="left:1px;top:42px;font-family:'Liberation Mono',monospace;font-size:12px;letter-spacing:0.6px;color:#5a0000;line-height:14px;top:44px">3 years ago</div>
<div class="a" style="left:110px;top:43px;width:61px;height:14px;background:#d3d3d3"></div>
<svg style="left:114px;top:44px" width="10" height="10"><circle cx="5" cy="5" r="4.3" fill="url(#gdot)" stroke="#1e2e26" stroke-width="0.9"/></svg>
<div class="t" style="left:129px;top:44px;font-family:'Liberation Mono',monospace;font-size:12px;letter-spacing:0.6px;color:#a8a8a8;line-height:14px">135</div>
<div class="t" style="left:237.9px;top:44px;font-family:'Liberation Mono',monospace;font-size:12px;letter-spacing:0.6px;line-height:14px;white-space:pre"><span style="color:#3c3c3c">beingWatched--;</span></div>
<div class="a" style="left:0px;top:57px;width:110px;height:14px;background:#d3d3d3"></div>
<div class="t" style="left:1px;top:58px;font-family:'Liberation Mono',monospace;font-size:12px;letter-spacing:0.6px;color:#333;line-height:14px">13 years ago</div>
<div class="a" style="left:110px;top:57px;width:61px;height:14px;background:#d3d3d3"></div>
<svg style="left:114px;top:58px" width="10" height="10"><circle cx="5" cy="5" r="4.3" fill="url(#gdot)" stroke="#1e2e26" stroke-width="0.9"/></svg>
<div class="t" style="left:129px;top:58px;font-family:'Liberation Mono',monospace;font-size:12px;letter-spacing:0.6px;color:#a8a8a8;line-height:14px">136</div>
<svg style="left:158px;top:62px" width="9" height="5"><path d="M0 0 H8 L4 4.5 Z" fill="#555"/></svg>
<div class="t" style="left:206.7px;top:58px;font-family:'Liberation Mono',monospace;font-size:12px;letter-spacing:0.6px;line-height:14px;white-space:pre"><span style="color:#3c3c3c">} </span><span style="color:#a39a34">else</span><span style="color:#3c3c3c"> {</span></div>
<div class="a" style="left:0px;top:71px;width:110px;height:14px;background:#ff0000"></div>
<div class="t" style="left:1px;top:70px;font-family:'Liberation Mono',monospace;font-size:12px;letter-spacing:0.6px;color:#5a0000;line-height:14px;top:72px">3 years ago</div>
<div class="a" style="left:110px;top:71px;width:61px;height:14px;background:#d3d3d3"></div>
<div class="t" style="left:129px;top:72px;font-family:'Liberation Mono',monospace;font-size:12px;letter-spacing:0.6px;color:#a8a8a8;line-height:14px">137</div>
<div class="t" style="left:237.9px;top:72px;font-family:'Liberation Mono',monospace;font-size:12px;letter-spacing:0.6px;line-height:14px;white-space:pre"><span style="color:#3aa33a">/* my_rank == 0 */</span></div>
<div class="a" style="left:0px;top:85px;width:110px;height:14px;background:#ff0000"></div>
<div class="t" style="left:1px;top:84px;font-family:'Liberation Mono',monospace;font-size:12px;letter-spacing:0.6px;color:#5a0000;line-height:14px;top:86px">3 years ago</div>
<div class="a" style="left:110px;top:85px;width:61px;height:14px;background:#d3d3d3"></div>
<svg style="left:114px;top:86px" width="10" height="10"><circle cx="5" cy="5" r="4.3" fill="url(#gdot)" stroke="#1e2e26" stroke-width="0.9"/></svg>
<div class="t" style="left:129px;top:86px;font-family:'Liberation Mono',monospace;font-size:12px;letter-spacing:0.6px;color:#a8a8a8;line-height:14px">138</div>
<svg style="left:158px;top:90px" width="9" height="5"><path d="M0 0 H8 L4 4.5 Z" fill="#555"/></svg>
<div class="t" style="left:237.9px;top:86px;font-family:'Liberation Mono',monospace;font-size:12px;letter-spacing:0.6px;line-height:14px;white-space:pre"><span style="color:#a39a34">for</span><span style="color:#3c3c3c"> (source = </span><span style="color:#4444b8">1</span><span style="color:#3c3c3c">; source &lt; p; source++) {</span></div>
<div class="a" style="left:0px;top:99px;width:110px;height:14px;background:#ff0000"></div>
<div class="t" style="left:1px;top:98px;font-family:'Liberation Mono',monospace;font-size:12px;letter-spacing:0.6px;color:#5a0000;line-height:14px;top:100px">3 years ago</div>
<div class="a" style="left:110px;top:99px;width:61px;height:14px;background:#d3d3d3"></div>
<svg style="left:114px;top:100px" width="10" height="10"><circle cx="5" cy="5" r="4.3" fill="url(#gdot)" stroke="#1e2e26" stroke-width="0.9"/></svg>
<div class="t" style="left:129px;top:100px;font-family:'Liberation Mono',monospace;font-size:12px;letter-spacing:0.6px;color:#a8a8a8;line-height:14px">139</div>
<div class="t" style="left:269.1px;top:100px;font-family:'Liberation Mono',monospace;font-size:12px;letter-spacing:0.6px;line-height:14px;white-space:pre"><span style="color:#3c3c3c">printf(</span><span style="color:#3c3c3c">"</span><span style="color:#2ea24a">waiting for message from (%d)\n</span><span style="color:#3c3c3c">"</span><span style="color:#3c3c3c">, source);</span></div>
<div class="a" style="left:0px;top:113px;width:110px;height:14px;background:#ff0000"></div>
<div class="t" style="left:1px;top:112px;font-family:'Liberation Mono',monospace;font-size:12px;letter-spacing:0.6px;color:#5a0000;line-height:14px;top:114px">3 years ago</div>
<div class="a" style="left:110px;top:113px;width:61px;height:14px;background:#d3d3d3"></div>
<svg style="left:114px;top:114px" width="10" height="10"><circle cx="5" cy="5" r="4.3" fill="url(#gdot)" stroke="#1e2e26" stroke-width="0.9"/></svg>
<div class="t" style="left:129px;top:114px;font-family:'Liberation Mono',monospace;font-size:12px;letter-spacing:0.6px;color:#a8a8a8;line-height:14px">140</div>
<div class="t" style="left:269.1px;top:114px;font-family:'Liberation Mono',monospace;font-size:12px;letter-spacing:0.6px;line-height:14px;white-space:pre"><span style="color:#5040f8">MPI_Recv</span><span style="color:#3c3c3c">(message, </span><span style="color:#4444b8">100</span><span style="color:#3c3c3c">, </span><span style="color:#5040f8">MPI_CHAR</span><span style="color:#3c3c3c">, source, tag, </span><span style="color:#5040f8">MPI_COMM_WORLD</span><span style="color:#3c3c3c">, &amp;status);</span></div>
<div class="a" style="left:0px;top:127px;width:110px;height:14px;background:#ff0000"></div>
<div class="t" style="left:1px;top:126px;font-family:'Liberation Mono',monospace;font-size:12px;letter-spacing:0.6px;color:#5a0000;line-height:14px;top:128px">3 years ago</div>
<div class="a" style="left:110px;top:127px;width:61px;height:14px;background:#d3d3d3"></div>
<svg style="left:114px;top:128px" width="10" height="10"><circle cx="5" cy="5" r="4.3" fill="url(#gdot)" stroke="#1e2e26" stroke-width="0.9"/></svg>
<div class="t" style="left:129px;top:128px;font-family:'Liberation Mono',monospace;font-size:12px;letter-spacing:0.6px;color:#a8a8a8;line-height:14px">141</div>
<div class="t" style="left:269.1px;top:128px;font-family:'Liberation Mono',monospace;font-size:12px;letter-spacing:0.6px;line-height:14px;white-space:pre"><span style="color:#3c3c3c">printf(</span><span style="color:#3c3c3c">"</span><span style="color:#2ea24a">%s\n</span><span style="color:#3c3c3c">"</span><span style="color:#3c3c3c">, message);</span></div>
<div class="a" style="left:0px;top:141px;width:110px;height:14px;background:#ff0000"></div>
<div class="t" style="left:1px;top:140px;font-family:'Liberation Mono',monospace;font-size:12px;letter-spacing:0.6px;color:#5a0000;line-height:14px;top:142px">3 years ago</div>
<div class="a" style="left:110px;top:141px;width:61px;height:14px;background:#d3d3d3"></div>
<svg style="left:114px;top:142px" width="10" height="10"><circle cx="5" cy="5" r="4.3" fill="url(#gdot)" stroke="#1e2e26" stroke-width="0.9"/></svg>
<div class="t" style="left:129px;top:142px;font-family:'Liberation Mono',monospace;font-size:12px;letter-spacing:0.6px;color:#a8a8a8;line-height:14px">142</div>
<div class="t" style="left:269.1px;top:142px;font-family:'Liberation Mono',monospace;font-size:12px;letter-spacing:0.6px;line-height:14px;white-space:pre"><span style="color:#3c3c3c">beingWatched++;</span></div>
<div class="a" style="left:0px;top:155px;width:110px;height:14px;background:#ff0000"></div>
<div class="t" style="left:1px;top:154px;font-family:'Liberation Mono',monospace;font-size:12px;letter-spacing:0.6px;color:#5a0000;line-height:14px;top:156px">3 years ago</div>
<div class="a" style="left:110px;top:155px;width:61px;height:14px;background:#d3d3d3"></div>
<svg style="left:114px;top:156px" width="10" height="10"><circle cx="5" cy="5" r="4.3" fill="url(#gdot)" stroke="#1e2e26" stroke-width="0.9"/></svg>
<div class="t" style="left:129px;top:156px;font-family:'Liberation Mono',monospace;font-size:12px;letter-spacing:0.6px;color:#a8a8a8;line-height:14px">143</div>
<div class="t" style="left:237.9px;top:156px;font-family:'Liberation Mono',monospace;font-size:12px;letter-spacing:0.6px;line-height:14px;white-space:pre"><span style="color:#3c3c3c">}</span></div>
<div class="a" style="left:0px;top:169px;width:110px;height:14px;background:#d3d3d3"></div>
<div class="t" style="left:1px;top:170px;font-family:'Liberation Mono',monospace;font-size:12px;letter-spacing:0.6px;color:#333;line-height:14px">12 years ago</div>
<div class="a" style="left:110px;top:169px;width:61px;height:14px;background:#d3d3d3"></div>
<svg style="left:114px;top:170px" width="10" height="10"><circle cx="5" cy="5" r="4.3" fill="url(#gdot)" stroke="#1e2e26" stroke-width="0.9"/></svg>
<div class="t" style="left:129px;top:170px;font-family:'Liberation Mono',monospace;font-size:12px;letter-spacing:0.6px;color:#a8a8a8;line-height:14px">144</div>
<div class="t" style="left:206.7px;top:170px;font-family:'Liberation Mono',monospace;font-size:12px;letter-spacing:0.6px;line-height:14px;white-space:pre"><span style="color:#3c3c3c">}</span></div>
<div class="a" style="left:0px;top:183px;width:110px;height:14px;background:#d3d3d3"></div>
<div class="t" style="left:1px;top:184px;font-family:'Liberation Mono',monospace;font-size:12px;letter-spacing:0.6px;color:#333;line-height:14px">13 years ago</div>
<div class="a" style="left:110px;top:183px;width:61px;height:14px;background:#d3d3d3"></div>
<div class="t" style="left:129px;top:184px;font-family:'Liberation Mono',monospace;font-size:12px;letter-spacing:0.6px;color:#a8a8a8;line-height:14px">145</div>
<div class="a" style="left:0px;top:197px;width:110px;height:14px;background:#ff0000"></div>
<div class="t" style="left:1px;top:196px;font-family:'Liberation Mono',monospace;font-size:12px;letter-spacing:0.6px;color:#5a0000;line-height:14px;top:198px">3 years ago</div>
<div class="a" style="left:110px;top:197px;width:61px;height:14px;background:#d3d3d3"></div>
<svg style="left:114px;top:198px" width="10" height="10"><circle cx="5" cy="5" r="4.3" fill="url(#gdot)" stroke="#1e2e26" stroke-width="0.9"/></svg>
<div class="t" style="left:129px;top:198px;font-family:'Liberation Mono',monospace;font-size:12px;letter-spacing:0.6px;color:#a8a8a8;line-height:14px">146</div>
<div class="t" style="left:206.7px;top:198px;font-family:'Liberation Mono',monospace;font-size:12px;letter-spacing:0.6px;line-height:14px;white-space:pre"><span style="color:#a39a34">for</span><span style="color:#3c3c3c"> (i = </span><span style="color:#4444b8">1</span><span style="color:#3c3c3c">; i &lt; argc; i++)</span></div>
<div class="a" style="left:0px;top:211px;width:110px;height:14px;background:#ff0000"></div>
<div class="t" style="left:1px;top:210px;font-family:'Liberation Mono',monospace;font-size:12px;letter-spacing:0.6px;color:#5a0000;line-height:14px;top:212px">3 years ago</div>
<div class="a" style="left:110px;top:211px;width:61px;height:14px;background:#d3d3d3"></div>
<svg style="left:114px;top:212px" width="10" height="10"><circle cx="5" cy="5" r="4.3" fill="url(#gdot)" stroke="#1e2e26" stroke-width="0.9"/></svg>
<div class="t" style="left:129px;top:212px;font-family:'Liberation Mono',monospace;font-size:12px;letter-spacing:0.6px;color:#a8a8a8;line-height:14px">147</div>
<div class="t" style="left:237.9px;top:212px;font-family:'Liberation Mono',monospace;font-size:12px;letter-spacing:0.6px;line-height:14px;white-space:pre"><span style="color:#a39a34">if</span><span style="color:#3c3c3c"> (argv[i] &amp;&amp; !strcmp(argv[i], </span><span style="color:#3c3c3c">"</span><span style="color:#2ea24a">memcrash</span><span style="color:#3c3c3c">"</span><span style="color:#3c3c3c">))</span></div>
<div class="a" style="left:0px;top:225px;width:110px;height:14px;background:#ff0000"></div>
<div class="t" style="left:1px;top:224px;font-family:'Liberation Mono',monospace;font-size:12px;letter-spacing:0.6px;color:#5a0000;line-height:14px;top:226px">3 years ago</div>
<div class="a" style="left:110px;top:225px;width:61px;height:14px;background:#d3d3d3"></div>
<svg style="left:114px;top:226px" width="10" height="10"><circle cx="5" cy="5" r="4.3" fill="url(#gdot)" stroke="#1e2e26" stroke-width="0.9"/></svg>
<div class="t" style="left:129px;top:226px;font-family:'Liberation Mono',monospace;font-size:12px;letter-spacing:0.6px;color:#a8a8a8;line-height:14px">148</div>
<div class="t" style="left:269.1px;top:226px;font-family:'Liberation Mono',monospace;font-size:12px;letter-spacing:0.6px;line-height:14px;white-space:pre"><span style="color:#3c3c3c">func3();</span></div>
<div class="a" style="left:0px;top:239px;width:110px;height:14px;background:#ff0000"></div>
<div class="t" style="left:1px;top:238px;font-family:'Liberation Mono',monospace;font-size:12px;letter-spacing:0.6px;color:#5a0000;line-height:14px;top:240px">3 years ago</div>
<div class="a" style="left:110px;top:239px;width:61px;height:14px;background:#d3d3d3"></div>
<div class="t" style="left:129px;top:240px;font-family:'Liberation Mono',monospace;font-size:12px;letter-spacing:0.6px;color:#a8a8a8;line-height:14px">149</div>
<div class="a" style="left:0px;top:253px;width:110px;height:14px;background:#ff0000"></div>
<div class="t" style="left:1px;top:252px;font-family:'Liberation Mono',monospace;font-size:12px;letter-spacing:0.6px;color:#5a0000;line-height:14px;top:254px">3 years ago</div>
<div class="a" style="left:110px;top:253px;width:61px;height:14px;background:#d3d3d3"></div>
<svg style="left:114px;top:254px" width="10" height="10"><circle cx="5" cy="5" r="4.3" fill="url(#gdot)" stroke="#1e2e26" stroke-width="0.9"/></svg>
<div class="t" style="left:129px;top:254px;font-family:'Liberation Mono',monospace;font-size:12px;letter-spacing:0.6px;color:#a8a8a8;line-height:14px">150</div>
<div class="t" style="left:206.7px;top:254px;font-family:'Liberation Mono',monospace;font-size:12px;letter-spacing:0.6px;line-height:14px;white-space:pre"><span style="color:#a39a34">for</span><span style="color:#3c3c3c"> (i = </span><span style="color:#4444b8">1</span><span style="color:#3c3c3c">; i &lt; argc; i++)</span></div>
<div class="a" style="left:0px;top:267px;width:110px;height:14px;background:#ff0000"></div>
<div class="t" style="left:1px;top:266px;font-family:'Liberation Mono',monospace;font-size:12px;letter-spacing:0.6px;color:#5a0000;line-height:14px;top:268px">3 years ago</div>
<div class="a" style="left:110px;top:267px;width:61px;height:14px;background:#d3d3d3"></div>
<svg style="left:114px;top:268px" width="10" height="10"><circle cx="5" cy="5" r="4.3" fill="url(#gdot)" stroke="#1e2e26" stroke-width="0.9"/></svg>
<div class="t" style="left:129px;top:268px;font-family:'Liberation Mono',monospace;font-size:12px;letter-spacing:0.6px;color:#a8a8a8;line-height:14px">151</div>
<div class="t" style="left:237.9px;top:268px;font-family:'Liberation Mono',monospace;font-size:12px;letter-spacing:0.6px;line-height:14px;white-space:pre"><span style="color:#a39a34">if</span><span style="color:#3c3c3c"> (argv[i] &amp;&amp; !strcmp(argv[i], </span><span style="color:#3c3c3c">"</span><span style="color:#2ea24a">guardafter</span><span style="color:#3c3c3c">"</span><span style="color:#3c3c3c">))</span></div>
<div class="a" style="left:0px;top:281px;width:110px;height:14px;background:#ff0000"></div>
<div class="t" style="left:1px;top:280px;font-family:'Liberation Mono',monospace;font-size:12px;letter-spacing:0.6px;color:#5a0000;line-height:14px;top:282px">3 years ago</div>
<div class="a" style="left:110px;top:281px;width:61px;height:14px;background:#d3d3d3"></div>
<svg style="left:114px;top:282px" width="10" height="10"><circle cx="5" cy="5" r="4.3" fill="url(#gdot)" stroke="#1e2e26" stroke-width="0.9"/></svg>
<div class="t" style="left:129px;top:282px;font-family:'Liberation Mono',monospace;font-size:12px;letter-spacing:0.6px;color:#a8a8a8;line-height:14px">152</div>
<div class="t" style="left:269.1px;top:282px;font-family:'Liberation Mono',monospace;font-size:12px;letter-spacing:0.6px;line-height:14px;white-space:pre"><span style="color:#3c3c3c">dynamicArray[</span><span style="color:#4444b8">100</span><span style="color:#3c3c3c"> </span><span style="color:#3aa33a">/*000*/</span><span style="color:#3c3c3c">] = </span><span style="color:#4444b8">2</span><span style="color:#3c3c3c">;</span></div>
<div class="a" style="left:0px;top:295px;width:110px;height:14px;background:#ff0000"></div>
<div class="t" style="left:1px;top:294px;font-family:'Liberation Mono',monospace;font-size:12px;letter-spacing:0.6px;color:#5a0000;line-height:14px;top:296px">3 years ago</div>
<div class="a" style="left:110px;top:295px;width:61px;height:14px;background:#d3d3d3"></div>
<div class="t" style="left:129px;top:296px;font-family:'Liberation Mono',monospace;font-size:12px;letter-spacing:0.6px;color:#a8a8a8;line-height:14px">153</div>
</div>
<div class="a" style="left:1285px;top:174px;width:14px;height:307px;background:#e3e3e3"></div>
<div class="a" style="left:1285px;top:174px;width:1px;height:307px;background:#c3c3c3"></div>
<div class="a" style="left:1286px;top:174px;width:13px;height:14px;background:linear-gradient(90deg,#fbfbfb,#f1f1f1)"></div>
<div class="a" style="left:1286px;top:188px;width:13px;height:1px;background:#c3c3c3"></div>
<svg style="left:1288px;top:179px" width="9" height="5"><path d="M0 4.5 H8.5 L4.25 0 Z" fill="#4d4d4d"/></svg>
<div class="a" style="left:1286px;top:396px;width:13px;height:34px;background:linear-gradient(90deg,#fbfbfb,#f1f1f1)"></div>
<div class="a" style="left:1286px;top:396px;width:13px;height:1px;background:#c3c3c3"></div>
<div class="a" style="left:1286px;top:430px;width:13px;height:1px;background:#c3c3c3"></div>
<div class="a" style="left:1286px;top:467px;width:13px;height:1px;background:#c3c3c3"></div>
<div class="a" style="left:1286px;top:468px;width:13px;height:13px;background:linear-gradient(90deg,#fbfbfb,#f1f1f1)"></div>
<svg style="left:1288px;top:472px" width="9" height="5"><path d="M0 0 H8.5 L4.25 4.5 Z" fill="#4d4d4d"/></svg>
<div class="a" style="left:261px;top:481px;width:1024px;height:15px;background:#e3e3e3"></div>
<div class="a" style="left:261px;top:481px;width:1024px;height:1px;background:#c3c3c3"></div>
<div class="a" style="left:261px;top:482px;width:13px;height:14px;background:linear-gradient(#fbfbfb,#f1f1f1)"></div>
<div class="a" style="left:274px;top:482px;width:1px;height:14px;background:#c3c3c3"></div>
<svg style="left:265px;top:485px" width="5" height="9"><path d="M4.5 0 V8.5 L0 4.25 Z" fill="#4d4d4d"/></svg>
<div class="a" style="left:275px;top:482px;width:955px;height:14px;background:linear-gradient(#fbfbfb,#f1f1f1)"></div>
<div class="a" style="left:1230px;top:482px;width:1px;height:14px;background:#c3c3c3"></div>
<div class="a" style="left:1271px;top:482px;width:1px;height:14px;background:#c3c3c3"></div>
<div class="a" style="left:1272px;top:482px;width:12px;height:14px;background:linear-gradient(#fbfbfb,#f1f1f1)"></div>
<svg style="left:1275px;top:485px" width="5" height="9"><path d="M0 0 V8.5 L4.5 4.25 Z" fill="#4d4d4d"/></svg>
<div class="a" style="left:1284px;top:481px;width:1px;height:15px;background:#c3c3c3"></div>
<div class="a" style="left:1285px;top:481px;width:14px;height:16px;background:#efefef"></div>
<div class="a" style="left:260px;top:496px;width:1039px;height:1px;background:#bdbdbd"></div>
<div class="a" style="left:1305px;top:145px;width:63px;height:24px;background:linear-gradient(#e0e0e0,#d9d9d9);border:1px solid #c0c0c0;border-bottom:none;border-radius:3px 3px 0 0"></div>
<div class="t" style="left:1317px;top:150px;;letter-spacing:-0.039px">Locals</div>
<div class="a" style="left:1481px;top:145px;width:106px;height:24px;background:linear-gradient(#e0e0e0,#d9d9d9);border:1px solid #c0c0c0;border-bottom:none;border-radius:3px 3px 0 0"></div>
<div class="t" style="left:1493px;top:150px;;letter-spacing:0.204px">Current Stack</div>
<div class="a" style="left:1305px;top:168px;width:288px;height:1px;background:#c4c4c4"></div>
<div class="a" style="left:1367px;top:143px;width:115px;height:26px;background:linear-gradient(#fdfdfd,#f2f2f2);border:1px solid #c0c0c0;border-bottom:none;border-radius:3px 3px 0 0"></div>
<div class="t" style="left:1379px;top:149px;;letter-spacing:0.189px">Current Line(s)</div>
<div class="t" style="left:1309px;top:172px;;letter-spacing:0.189px">Current Line(s)</div>
<svg style="left:1565px;top:174px" width="26" height="12"><rect x="0.5" y="0.5" width="10" height="10" rx="2" fill="none" stroke="#6a6a6a" stroke-width="0.9"/><rect x="4.2" y="2.3" width="4.3" height="4.3" rx="0.8" fill="none" stroke="#6a6a6a" stroke-width="0.9"/><rect x="2.3" y="4.3" width="4.3" height="4.3" rx="0.8" fill="#efefef" stroke="#6a6a6a" stroke-width="0.9"/><rect x="14.5" y="0.5" width="10" height="10" rx="2" fill="none" stroke="#6a6a6a" stroke-width="0.9"/><path d="M16.9 2.9 L22.1 8.1 M22.1 2.9 L16.9 8.1" stroke="#505050" stroke-width="1.9"/></svg>
<div class="a" style="left:1305px;top:189px;width:287px;height:289px;background:#fff;border:1px solid #bdbdbd"></div>
<div class="a" style="left:1306px;top:190px;width:285px;height:18px;background:linear-gradient(#fafafa,#ececec);border-bottom:1px solid #c4c4c4"></div>
<div class="a" style="left:1475px;top:190px;width:1px;height:18px;background:#cfcfcf"></div>
<div class="t" style="left:1308px;top:192px;;letter-spacing:0.184px">Name</div>
<div class="t" style="left:1478px;top:192px;;letter-spacing:0.131px">Value</div>
<div class="t" style="left:1329px;top:210px;;letter-spacing:0.257px">my_rank</div>
<div class="a" style="left:1479px;top:211px;width:26px;height:13px;background:#efefef"></div>
<svg style="left:0;top:0" width="1593" height="300"><path d="M1480 223.5 H1486 M1486 219.5 H1492 M1492 215.5 H1498 M1498 211.5 H1504" stroke="#000" stroke-width="1.2"/></svg>
<div class="t" style="left:1511px;top:210px;color:#000080"><b><i>0</i></b></div>
<svg style="left:1302px;top:314px" width="3" height="18"><rect x="0" y="0" width="1" height="1" fill="#b2b2b2"/><rect x="0" y="3" width="1" height="1" fill="#b2b2b2"/><rect x="0" y="6" width="1" height="1" fill="#b2b2b2"/><rect x="0" y="9" width="1" height="1" fill="#b2b2b2"/><rect x="0" y="12" width="1" height="1" fill="#b2b2b2"/><rect x="0" y="15" width="1" height="1" fill="#b2b2b2"/></svg>
<div class="a" style="left:0px;top:529px;width:1126px;height:1px;background:#c4c4c4"></div>
<div class="a" style="left:0px;top:506px;width:101px;height:24px;background:linear-gradient(#e0e0e0,#d9d9d9);border:1px solid #c0c0c0;border-bottom:none;border-radius:3px 3px 0 0"></div>
<div class="t" style="left:11px;top:511px;;letter-spacing:0.440px">Input/Output</div>
<div class="a" style="left:100px;top:506px;width:97px;height:24px;background:linear-gradient(#e0e0e0,#d9d9d9);border:1px solid #c0c0c0;border-bottom:none;border-radius:3px 3px 0 0"></div>
<div class="t" style="left:111px;top:511px;;letter-spacing:0.254px">Breakpoints</div>
<div class="a" style="left:196px;top:506px;width:100px;height:24px;background:linear-gradient(#e0e0e0,#d9d9d9);border:1px solid #c0c0c0;border-bottom:none;border-radius:3px 3px 0 0"></div>
<div class="t" style="left:207px;top:511px;;letter-spacing:0.287px">Watchpoints</div>
<div class="a" style="left:295px;top:506px;width:93px;height:24px;background:linear-gradient(#e0e0e0,#d9d9d9);border:1px solid #c0c0c0;border-bottom:none;border-radius:3px 3px 0 0"></div>
<div class="t" style="left:306px;top:511px;;letter-spacing:0.150px">Stacks (All)</div>
<div class="a" style="left:480px;top:506px;width:133px;height:24px;background:linear-gradient(#e0e0e0,#d9d9d9);border:1px solid #c0c0c0;border-bottom:none;border-radius:3px 3px 0 0"></div>
<div class="t" style="left:491px;top:511px;;letter-spacing:0.257px">Tracepoint Output</div>
<div class="a" style="left:612px;top:506px;width:75px;height:24px;background:linear-gradient(#e0e0e0,#d9d9d9);border:1px solid #c0c0c0;border-bottom:none;border-radius:3px 3px 0 0"></div>
<div class="t" style="left:623px;top:511px;;letter-spacing:0.116px">Logbook</div>
<div class="a" style="left:387px;top:504px;width:94px;height:26px;background:linear-gradient(#fdfdfd,#f2f2f2);border:1px solid #c0c0c0;border-bottom:none;border-radius:3px 3px 0 0"></div>
<div class="t" style="left:399px;top:510px;;letter-spacing:0.114px">Tracepoints</div>
<svg style="left:789px;top:500px" width="18" height="3"><rect x="0" y="0" width="1" height="1" fill="#b2b2b2"/><rect x="3" y="0" width="1" height="1" fill="#b2b2b2"/><rect x="6" y="0" width="1" height="1" fill="#b2b2b2"/><rect x="9" y="0" width="1" height="1" fill="#b2b2b2"/><rect x="12" y="0" width="1" height="1" fill="#b2b2b2"/><rect x="15" y="0" width="1" height="1" fill="#b2b2b2"/></svg>
<div class="t" style="left:4px;top:533px;;letter-spacing:0.114px">Tracepoints</div>
<svg style="left:1098px;top:535px" width="26" height="12"><rect x="0.5" y="0.5" width="10" height="10" rx="2" fill="none" stroke="#6a6a6a" stroke-width="0.9"/><rect x="4.2" y="2.3" width="4.3" height="4.3" rx="0.8" fill="none" stroke="#6a6a6a" stroke-width="0.9"/><rect x="2.3" y="4.3" width="4.3" height="4.3" rx="0.8" fill="#efefef" stroke="#6a6a6a" stroke-width="0.9"/><rect x="14.5" y="0.5" width="10" height="10" rx="2" fill="none" stroke="#6a6a6a" stroke-width="0.9"/><path d="M16.9 2.9 L22.1 8.1 M22.1 2.9 L16.9 8.1" stroke="#505050" stroke-width="1.9"/></svg>
<div class="a" style="left:0px;top:550px;width:1125px;height:246px;background:#fff;border:1px solid #bdbdbd;border-left:none"></div>
<div class="a" style="left:0px;top:551px;width:1110px;height:19px;background:linear-gradient(#fafafa,#ececec);border-bottom:1px solid #c4c4c4"></div>
<div class="a" style="left:25px;top:551px;width:1px;height:19px;background:#d2d2d2"></div>
<div class="a" style="left:118px;top:551px;width:1px;height:19px;background:#d2d2d2"></div>
<div class="a" style="left:198px;top:551px;width:1px;height:19px;background:#d2d2d2"></div>
<div class="a" style="left:248px;top:551px;width:1px;height:19px;background:#d2d2d2"></div>
<div class="a" style="left:302px;top:551px;width:1px;height:19px;background:#d2d2d2"></div>
<div class="a" style="left:403px;top:551px;width:1px;height:19px;background:#d2d2d2"></div>
<div class="a" style="left:792px;top:551px;width:1px;height:19px;background:#d2d2d2"></div>
<div class="a" style="left:876px;top:551px;width:1px;height:19px;background:#d2d2d2"></div>
<div class="a" style="left:966px;top:551px;width:1px;height:19px;background:#d2d2d2"></div>
<div class="a" style="left:1064px;top:551px;width:1px;height:19px;background:#d2d2d2"></div>
<div class="t" style="left:28px;top:553px;;letter-spacing:-0.170px">Processes</div>
<div class="t" style="left:121px;top:553px;;letter-spacing:0.076px">Threads</div>
<div class="t" style="left:201px;top:553px;;letter-spacing:-0.219px">File</div>
<div class="t" style="left:251px;top:553px;;letter-spacing:0.105px">Line</div>
<div class="t" style="left:305px;top:553px;;letter-spacing:0.189px">Actual Line</div>
<div class="t" style="left:406px;top:553px;;letter-spacing:0.177px">Variables</div>
<div class="t" style="left:795px;top:553px;;letter-spacing:0.146px">Function</div>
<div class="t" style="left:879px;top:553px;;letter-spacing:0.257px">Condition</div>
<div class="t" style="left:969px;top:553px;;letter-spacing:0.379px">Start After</div>
<div class="t" style="left:1067px;top:553px;;letter-spacing:0.100px">Trigger</div>
<div class="a" style="left:1110px;top:551px;width:1px;height:19px;background:#d2d2d2"></div>
<div class="a" style="left:0;top:570px;width:1110px;height:212px;overflow:hidden">
<div class="a" style="left:0px;top:29px;width:1110px;height:1px;background:#d2d2d2"></div>
<div class="a" style="left:25px;top:0px;width:1px;height:30px;background:#d2d2d2"></div>
<div class="a" style="left:118px;top:0px;width:1px;height:30px;background:#d2d2d2"></div>
<div class="a" style="left:198px;top:0px;width:1px;height:30px;background:#d2d2d2"></div>
<div class="a" style="left:248px;top:0px;width:1px;height:30px;background:#d2d2d2"></div>
<div class="a" style="left:302px;top:0px;width:1px;height:30px;background:#d2d2d2"></div>
<div class="a" style="left:403px;top:0px;width:1px;height:30px;background:#d2d2d2"></div>
<div class="a" style="left:792px;top:0px;width:1px;height:30px;background:#d2d2d2"></div>
<div class="a" style="left:876px;top:0px;width:1px;height:30px;background:#d2d2d2"></div>
<div class="a" style="left:966px;top:0px;width:1px;height:30px;background:#d2d2d2"></div>
<div class="a" style="left:1064px;top:0px;width:1px;height:30px;background:#d2d2d2"></div>
<svg style="left:3px;top:7px" width="14" height="14"><rect x="0.5" y="0.5" width="12.5" height="12.5" fill="#fff" stroke="#b8b8b8"/><path d="M3 6.5 L5.8 10.5 L10.5 2.5" stroke="#000" stroke-width="1.8" fill="none"/></svg>
<div class="t" style="left:29px;top:7px;;letter-spacing:0.135px">All</div>
<div class="t" style="left:122px;top:7px;;letter-spacing:0.333px">all</div>
<div class="t" style="left:202px;top:7px;;letter-spacing:0.230px">hello.c</div>
<div class="t" style="left:249px;top:7px;width:54px;text-align:center;letter-spacing:0.406px">132</div>
<div class="t" style="left:303px;top:7px;width:101px;text-align:center;letter-spacing:0.406px">132</div>
<div class="t" style="left:407px;top:7px;width:384px;overflow:hidden;letter-spacing:0.348px">dest</div>
<div class="t" style="left:796px;top:7px;;letter-spacing:0.449px">main</div>
<div class="t" style="left:966px;top:7px;width:98px;text-align:center">0</div>
<div class="a" style="left:0px;top:59px;width:1110px;height:1px;background:#d2d2d2"></div>
<div class="a" style="left:25px;top:30px;width:1px;height:30px;background:#d2d2d2"></div>
<div class="a" style="left:118px;top:30px;width:1px;height:30px;background:#d2d2d2"></div>
<div class="a" style="left:198px;top:30px;width:1px;height:30px;background:#d2d2d2"></div>
<div class="a" style="left:248px;top:30px;width:1px;height:30px;background:#d2d2d2"></div>
<div class="a" style="left:302px;top:30px;width:1px;height:30px;background:#d2d2d2"></div>
<div class="a" style="left:403px;top:30px;width:1px;height:30px;background:#d2d2d2"></div>
<div class="a" style="left:792px;top:30px;width:1px;height:30px;background:#d2d2d2"></div>
<div class="a" style="left:876px;top:30px;width:1px;height:30px;background:#d2d2d2"></div>
<div class="a" style="left:966px;top:30px;width:1px;height:30px;background:#d2d2d2"></div>
<div class="a" style="left:1064px;top:30px;width:1px;height:30px;background:#d2d2d2"></div>
<svg style="left:3px;top:37px" width="14" height="14"><rect x="0.5" y="0.5" width="12.5" height="12.5" fill="#fff" stroke="#b8b8b8"/><path d="M3 6.5 L5.8 10.5 L10.5 2.5" stroke="#000" stroke-width="1.8" fill="none"/></svg>
<div class="t" style="left:29px;top:37px;;letter-spacing:0.135px">All</div>
<div class="t" style="left:122px;top:37px;;letter-spacing:0.333px">all</div>
<div class="t" style="left:202px;top:37px;;letter-spacing:0.230px">hello.c</div>
<div class="t" style="left:249px;top:37px;width:54px;text-align:center;letter-spacing:0.406px">135</div>
<div class="t" style="left:303px;top:37px;width:101px;text-align:center;letter-spacing:0.406px">135</div>
<div class="t" style="left:407px;top:37px;width:384px;overflow:hidden;letter-spacing:0.275px">beingWatched</div>
<div class="t" style="left:796px;top:37px;;letter-spacing:0.449px">main</div>
<div class="t" style="left:966px;top:37px;width:98px;text-align:center">0</div>
<div class="a" style="left:0px;top:89px;width:1110px;height:1px;background:#d2d2d2"></div>
<div class="a" style="left:25px;top:60px;width:1px;height:30px;background:#d2d2d2"></div>
<div class="a" style="left:118px;top:60px;width:1px;height:30px;background:#d2d2d2"></div>
<div class="a" style="left:198px;top:60px;width:1px;height:30px;background:#d2d2d2"></div>
<div class="a" style="left:248px;top:60px;width:1px;height:30px;background:#d2d2d2"></div>
<div class="a" style="left:302px;top:60px;width:1px;height:30px;background:#d2d2d2"></div>
<div class="a" style="left:403px;top:60px;width:1px;height:30px;background:#d2d2d2"></div>
<div class="a" style="left:792px;top:60px;width:1px;height:30px;background:#d2d2d2"></div>
<div class="a" style="left:876px;top:60px;width:1px;height:30px;background:#d2d2d2"></div>
<div class="a" style="left:966px;top:60px;width:1px;height:30px;background:#d2d2d2"></div>
<div class="a" style="left:1064px;top:60px;width:1px;height:30px;background:#d2d2d2"></div>
<svg style="left:3px;top:67px" width="14" height="14"><rect x="0.5" y="0.5" width="12.5" height="12.5" fill="#fff" stroke="#b8b8b8"/><path d="M3 6.5 L5.8 10.5 L10.5 2.5" stroke="#000" stroke-width="1.8" fill="none"/></svg>
<div class="t" style="left:29px;top:67px;;letter-spacing:0.135px">All</div>
<div class="t" style="left:122px;top:67px;;letter-spacing:0.333px">all</div>
<div class="t" style="left:202px;top:67px;;letter-spacing:0.230px">hello.c</div>
<div class="t" style="left:249px;top:67px;width:54px;text-align:center;letter-spacing:0.406px">134</div>
<div class="t" style="left:303px;top:67px;width:101px;text-align:center;letter-spacing:0.406px">134</div>
<div class="t" style="left:407px;top:67px;width:384px;overflow:hidden;letter-spacing:-0.230px">message, MPI_CHAR, dest, tag, MPI_COMM_WORLD</div>
<div class="t" style="left:796px;top:67px;;letter-spacing:0.449px">main</div>
<div class="t" style="left:966px;top:67px;width:98px;text-align:center">0</div>
<div class="a" style="left:0px;top:119px;width:1110px;height:1px;background:#d2d2d2"></div>
<div class="a" style="left:25px;top:90px;width:1px;height:30px;background:#d2d2d2"></div>
<div class="a" style="left:118px;top:90px;width:1px;height:30px;background:#d2d2d2"></div>
<div class="a" style="left:198px;top:90px;width:1px;height:30px;background:#d2d2d2"></div>
<div class="a" style="left:248px;top:90px;width:1px;height:30px;background:#d2d2d2"></div>
<div class="a" style="left:302px;top:90px;width:1px;height:30px;background:#d2d2d2"></div>
<div class="a" style="left:403px;top:90px;width:1px;height:30px;background:#d2d2d2"></div>
<div class="a" style="left:792px;top:90px;width:1px;height:30px;background:#d2d2d2"></div>
<div class="a" style="left:876px;top:90px;width:1px;height:30px;background:#d2d2d2"></div>
<div class="a" style="left:966px;top:90px;width:1px;height:30px;background:#d2d2d2"></div>
<div class="a" style="left:1064px;top:90px;width:1px;height:30px;background:#d2d2d2"></div>
<svg style="left:3px;top:97px" width="14" height="14"><rect x="0.5" y="0.5" width="12.5" height="12.5" fill="#fff" stroke="#b8b8b8"/><path d="M3 6.5 L5.8 10.5 L10.5 2.5" stroke="#000" stroke-width="1.8" fill="none"/></svg>
<div class="t" style="left:29px;top:97px;;letter-spacing:0.135px">All</div>
<div class="t" style="left:122px;top:97px;;letter-spacing:0.333px">all</div>
<div class="t" style="left:202px;top:97px;;letter-spacing:0.230px">hello.c</div>
<div class="t" style="left:249px;top:97px;width:54px;text-align:center;letter-spacing:0.406px">136</div>
<div class="t" style="left:303px;top:97px;width:101px;text-align:center;letter-spacing:0.406px">138</div>
<div class="t" style="left:407px;top:97px;width:384px;overflow:hidden;letter-spacing:0.259px">my_rank, p</div>
<div class="t" style="left:796px;top:97px;;letter-spacing:0.449px">main</div>
<div class="t" style="left:966px;top:97px;width:98px;text-align:center">0</div>
<div class="a" style="left:0px;top:149px;width:1110px;height:1px;background:#d2d2d2"></div>
<div class="a" style="left:25px;top:120px;width:1px;height:30px;background:#d2d2d2"></div>
<div class="a" style="left:118px;top:120px;width:1px;height:30px;background:#d2d2d2"></div>
<div class="a" style="left:198px;top:120px;width:1px;height:30px;background:#d2d2d2"></div>
<div class="a" style="left:248px;top:120px;width:1px;height:30px;background:#d2d2d2"></div>
<div class="a" style="left:302px;top:120px;width:1px;height:30px;background:#d2d2d2"></div>
<div class="a" style="left:403px;top:120px;width:1px;height:30px;background:#d2d2d2"></div>
<div class="a" style="left:792px;top:120px;width:1px;height:30px;background:#d2d2d2"></div>
<div class="a" style="left:876px;top:120px;width:1px;height:30px;background:#d2d2d2"></div>
<div class="a" style="left:966px;top:120px;width:1px;height:30px;background:#d2d2d2"></div>
<div class="a" style="left:1064px;top:120px;width:1px;height:30px;background:#d2d2d2"></div>
<svg style="left:3px;top:127px" width="14" height="14"><rect x="0.5" y="0.5" width="12.5" height="12.5" fill="#fff" stroke="#b8b8b8"/><path d="M3 6.5 L5.8 10.5 L10.5 2.5" stroke="#000" stroke-width="1.8" fill="none"/></svg>
<div class="t" style="left:29px;top:127px;;letter-spacing:0.135px">All</div>
<div class="t" style="left:122px;top:127px;;letter-spacing:0.333px">all</div>
<div class="t" style="left:202px;top:127px;;letter-spacing:0.230px">hello.c</div>
<div class="t" style="left:249px;top:127px;width:54px;text-align:center;letter-spacing:0.406px">138</div>
<div class="t" style="left:303px;top:127px;width:101px;text-align:center;letter-spacing:0.406px">138</div>
<div class="t" style="left:407px;top:127px;width:384px;overflow:hidden;letter-spacing:0.181px">source, p</div>
<div class="t" style="left:796px;top:127px;;letter-spacing:0.449px">main</div>
<div class="t" style="left:966px;top:127px;width:98px;text-align:center">0</div>
<div class="a" style="left:0px;top:179px;width:1110px;height:1px;background:#d2d2d2"></div>
<div class="a" style="left:25px;top:150px;width:1px;height:30px;background:#d2d2d2"></div>
<div class="a" style="left:118px;top:150px;width:1px;height:30px;background:#d2d2d2"></div>
<div class="a" style="left:198px;top:150px;width:1px;height:30px;background:#d2d2d2"></div>
<div class="a" style="left:248px;top:150px;width:1px;height:30px;background:#d2d2d2"></div>
<div class="a" style="left:302px;top:150px;width:1px;height:30px;background:#d2d2d2"></div>
<div class="a" style="left:403px;top:150px;width:1px;height:30px;background:#d2d2d2"></div>
<div class="a" style="left:792px;top:150px;width:1px;height:30px;background:#d2d2d2"></div>
<div class="a" style="left:876px;top:150px;width:1px;height:30px;background:#d2d2d2"></div>
<div class="a" style="left:966px;top:150px;width:1px;height:30px;background:#d2d2d2"></div>
<div class="a" style="left:1064px;top:150px;width:1px;height:30px;background:#d2d2d2"></div>
<svg style="left:3px;top:157px" width="14" height="14"><rect x="0.5" y="0.5" width="12.5" height="12.5" fill="#fff" stroke="#b8b8b8"/><path d="M3 6.5 L5.8 10.5 L10.5 2.5" stroke="#000" stroke-width="1.8" fill="none"/></svg>
<div class="t" style="left:29px;top:157px;;letter-spacing:0.135px">All</div>
<div class="t" style="left:122px;top:157px;;letter-spacing:0.333px">all</div>
<div class="t" style="left:202px;top:157px;;letter-spacing:0.230px">hello.c</div>
<div class="t" style="left:249px;top:157px;width:54px;text-align:center;letter-spacing:0.406px">139</div>
<div class="t" style="left:303px;top:157px;width:101px;text-align:center;letter-spacing:0.406px">139</div>
<div class="t" style="left:407px;top:157px;width:384px;overflow:hidden;letter-spacing:0.181px">source, p</div>
<div class="t" style="left:796px;top:157px;;letter-spacing:0.449px">main</div>
<div class="t" style="left:966px;top:157px;width:98px;text-align:center">0</div>
<div class="a" style="left:0px;top:209px;width:1110px;height:1px;background:#d2d2d2"></div>
<div class="a" style="left:25px;top:180px;width:1px;height:30px;background:#d2d2d2"></div>
<div class="a" style="left:118px;top:180px;width:1px;height:30px;background:#d2d2d2"></div>
<div class="a" style="left:198px;top:180px;width:1px;height:30px;background:#d2d2d2"></div>
<div class="a" style="left:248px;top:180px;width:1px;height:30px;background:#d2d2d2"></div>
<div class="a" style="left:302px;top:180px;width:1px;height:30px;background:#d2d2d2"></div>
<div class="a" style="left:403px;top:180px;width:1px;height:30px;background:#d2d2d2"></div>
<div class="a" style="left:792px;top:180px;width:1px;height:30px;background:#d2d2d2"></div>
<div class="a" style="left:876px;top:180px;width:1px;height:30px;background:#d2d2d2"></div>
<div class="a" style="left:966px;top:180px;width:1px;height:30px;background:#d2d2d2"></div>
<div class="a" style="left:1064px;top:180px;width:1px;height:30px;background:#d2d2d2"></div>
<svg style="left:3px;top:187px" width="14" height="14"><rect x="0.5" y="0.5" width="12.5" height="12.5" fill="#fff" stroke="#b8b8b8"/><path d="M3 6.5 L5.8 10.5 L10.5 2.5" stroke="#000" stroke-width="1.8" fill="none"/></svg>
<div class="t" style="left:29px;top:187px;;letter-spacing:0.135px">All</div>
<div class="t" style="left:122px;top:187px;;letter-spacing:0.333px">all</div>
<div class="t" style="left:202px;top:187px;;letter-spacing:0.230px">hello.c</div>
<div class="t" style="left:249px;top:187px;width:54px;text-align:center;letter-spacing:0.406px">140</div>
<div class="t" style="left:303px;top:187px;width:101px;text-align:center;letter-spacing:0.406px">140</div>
<div class="t" style="left:407px;top:187px;width:384px;overflow:hidden;letter-spacing:-0.128px">message, MPI_CHAR, source, tag, MPI_COMM_WORLD, status, p</div>
<div class="t" style="left:796px;top:187px;;letter-spacing:0.449px">main</div>
<div class="t" style="left:966px;top:187px;width:98px;text-align:center">0</div>
<div class="a" style="left:25px;top:210px;width:1px;height:2px;background:#d2d2d2"></div>
<div class="a" style="left:118px;top:210px;width:1px;height:2px;background:#d2d2d2"></div>
<div class="a" style="left:198px;top:210px;width:1px;height:2px;background:#d2d2d2"></div>
<div class="a" style="left:248px;top:210px;width:1px;height:2px;background:#d2d2d2"></div>
<div class="a" style="left:302px;top:210px;width:1px;height:2px;background:#d2d2d2"></div>
<div class="a" style="left:403px;top:210px;width:1px;height:2px;background:#d2d2d2"></div>
<div class="a" style="left:792px;top:210px;width:1px;height:2px;background:#d2d2d2"></div>
<div class="a" style="left:876px;top:210px;width:1px;height:2px;background:#d2d2d2"></div>
<div class="a" style="left:966px;top:210px;width:1px;height:2px;background:#d2d2d2"></div>
<div class="a" style="left:1064px;top:210px;width:1px;height:2px;background:#d2d2d2"></div>
</div>
<div class="a" style="left:1110px;top:551px;width:14px;height:230px;background:#e3e3e3"></div>
<div class="a" style="left:1110px;top:551px;width:1px;height:230px;background:#c3c3c3"></div>
<div class="a" style="left:1111px;top:551px;width:13px;height:13px;background:linear-gradient(90deg,#fbfbfb,#f1f1f1)"></div>
<div class="a" style="left:1111px;top:564px;width:13px;height:1px;background:#c3c3c3"></div>
<svg style="left:1113px;top:555px" width="9" height="5"><path d="M0 4.5 H8.5 L4.25 0 Z" fill="#4d4d4d"/></svg>
<div class="a" style="left:1111px;top:565px;width:13px;height:83px;background:linear-gradient(90deg,#fbfbfb,#f1f1f1)"></div>
<div class="a" style="left:1111px;top:648px;width:13px;height:1px;background:#c3c3c3"></div>
<div class="a" style="left:1111px;top:767px;width:13px;height:1px;background:#c3c3c3"></div>
<div class="a" style="left:1111px;top:768px;width:13px;height:13px;background:linear-gradient(90deg,#fbfbfb,#f1f1f1)"></div>
<svg style="left:1113px;top:772px" width="9" height="5"><path d="M0 0 H8.5 L4.25 4.5 Z" fill="#4d4d4d"/></svg>
<div class="a" style="left:0px;top:781px;width:1110px;height:14px;background:#e3e3e3"></div>
<div class="a" style="left:0px;top:781px;width:1124px;height:1px;background:#c3c3c3"></div>
<div class="a" style="left:0px;top:782px;width:13px;height:13px;background:linear-gradient(#fbfbfb,#f1f1f1)"></div>
<div class="a" style="left:13px;top:782px;width:1px;height:13px;background:#c3c3c3"></div>
<svg style="left:4px;top:784px" width="5" height="9"><path d="M4.5 0 V8.5 L0 4.25 Z" fill="#4d4d4d"/></svg>
<div class="a" style="left:14px;top:782px;width:583px;height:13px;background:linear-gradient(#fbfbfb,#f1f1f1)"></div>
<div class="a" style="left:597px;top:782px;width:1px;height:13px;background:#c3c3c3"></div>
<div class="a" style="left:1096px;top:782px;width:1px;height:13px;background:#c3c3c3"></div>
<div class="a" style="left:1097px;top:782px;width:13px;height:13px;background:linear-gradient(#fbfbfb,#f1f1f1)"></div>
<svg style="left:1100px;top:784px" width="5" height="9"><path d="M0 0 V8.5 L4.5 4.25 Z" fill="#4d4d4d"/></svg>
<div class="a" style="left:1110px;top:781px;width:1px;height:14px;background:#c3c3c3"></div>
<div class="a" style="left:1111px;top:782px;width:13px;height:13px;background:#efefef"></div>
<div class="a" style="left:0px;top:795px;width:1125px;height:1px;background:#bdbdbd"></div>
<div class="t" style="left:1135px;top:506px;;letter-spacing:0.229px">Evaluate</div>
<svg style="left:1565px;top:508px" width="26" height="12"><rect x="0.5" y="0.5" width="10" height="10" rx="2" fill="none" stroke="#6a6a6a" stroke-width="0.9"/><rect x="4.2" y="2.3" width="4.3" height="4.3" rx="0.8" fill="none" stroke="#6a6a6a" stroke-width="0.9"/><rect x="2.3" y="4.3" width="4.3" height="4.3" rx="0.8" fill="#efefef" stroke="#6a6a6a" stroke-width="0.9"/><rect x="14.5" y="0.5" width="10" height="10" rx="2" fill="none" stroke="#6a6a6a" stroke-width="0.9"/><path d="M16.9 2.9 L22.1 8.1 M22.1 2.9 L16.9 8.1" stroke="#505050" stroke-width="1.9"/></svg>
<div class="a" style="left:1131px;top:523px;width:461px;height:253px;background:#fff;border:1px solid #bdbdbd"></div>
<div class="a" style="left:1132px;top:524px;width:459px;height:19px;background:linear-gradient(#fafafa,#ececec);border-bottom:1px solid #c4c4c4"></div>
<div class="a" style="left:1174px;top:524px;width:1px;height:19px;background:#cfcfcf"></div>
<div class="t" style="left:1134px;top:526px;;letter-spacing:0.184px">Name</div>
<div class="t" style="left:1177px;top:526px;;letter-spacing:0.131px">Value</div>
<svg style="left:1127px;top:643px" width="3" height="18"><rect x="0" y="0" width="1" height="1" fill="#b2b2b2"/><rect x="0" y="3" width="1" height="1" fill="#b2b2b2"/><rect x="0" y="6" width="1" height="1" fill="#b2b2b2"/><rect x="0" y="9" width="1" height="1" fill="#b2b2b2"/><rect x="0" y="12" width="1" height="1" fill="#b2b2b2"/><rect x="0" y="15" width="1" height="1" fill="#b2b2b2"/></svg>
<div class="t" style="left:1530px;top:800px;;letter-spacing:-0.059px">Ready</div>
<svg style="left:0;top:0" width="1593" height="815"><g fill="#b0b0b0"><rect x="1589" y="806" width="1" height="1"/><rect x="1586" y="809" width="1" height="1"/><rect x="1589" y="809" width="1" height="1"/><rect x="1583" y="812" width="1" height="1"/><rect x="1586" y="812" width="1" height="1"/><rect x="1589" y="812" width="1" height="1"/></g></svg>
<div class="a" style="left:1592px;top:0px;width:1px;height:176px;background:#202020"></div>
<div class="a" style="left:1592px;top:176px;width:1px;height:639px;background:#8c8c8c"></div></body></html>
